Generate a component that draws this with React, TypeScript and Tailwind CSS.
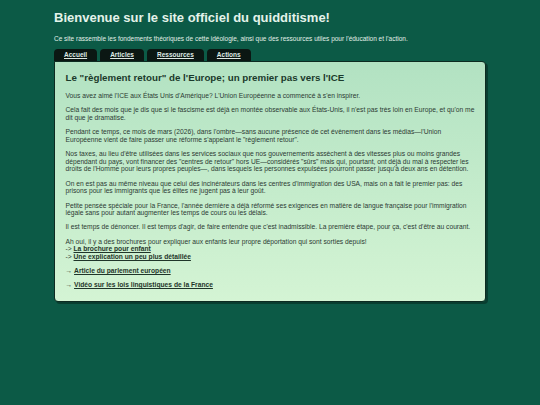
import React from "react";

const tabs = ["Accueil", "Articles", "Ressources", "Actions"];

export default function App() {
  return (
    <div
      className="min-h-[405px] bg-[#0c5a46]"
      style={{ fontFamily: '"Liberation Sans", Arial, sans-serif' }}
    >
      <div className="w-[432px] mx-auto pt-[10px]">
        <h1 className="text-[13px] leading-[15px] font-bold text-[#e4f3ea]">
          Bienvenue sur le site officiel du quidditisme!
        </h1>
        <p className="mt-[9.5px] text-[6.5px] leading-[7.5px] text-[#e2f0e8]">
          Ce site rassemble les fondements théoriques de cette idéologie, ainsi que des ressources utiles pour l'éducation et l'action.
        </p>
        <nav className="mt-[7px] flex gap-[3px]">
          {tabs.map((t) => (
            <a
              key={t}
              href="#"
              className="h-[12px] flex items-center px-[10px] rounded-t-[4px] bg-[#0b1713] text-[6.5px] font-bold underline text-[#dfeae4]"
            >
              {t}
            </a>
          ))}
        </nav>
        <div className="border border-[#0d2b21] rounded-[4px] rounded-tl-none bg-linear-to-b from-[#b2e2c2] to-[#d4f4d4] shadow-[2px_2px_0_rgba(0,0,0,0.3)] px-[10.5px] pt-[10px] pb-[12px] text-[6.7px] leading-[7.7px] text-[#2c3a33]">
          <h2 className="text-[9.75px] leading-[11px] font-bold text-[#1b3a2b] mb-[9px]">
            Le "règlement retour" de l'Europe; un premier pas vers l'ICE
          </h2>
          <div className="flex flex-col gap-[6.5px]">
            <p>Vous avez aimé l'ICE aux États Unis d'Amérique? L'Union Européenne a commencé à s'en inspirer.</p>
            <p>
              Cela fait des mois que je dis que si le fascisme est déjà en montée observable aux États-Unis, il n'est pas très loin en Europe, et qu'on me dit que je dramatise.
            </p>
            <p>
              Pendant ce temps, ce mois de mars (2026), dans l'ombre—sans aucune présence de cet évènement dans les médias—l'Union Européenne vient de faire passer une réforme s'appelant le "règlement retour".
            </p>
            <p>
              Nos taxes, au lieu d'être utilisées dans les services sociaux que nos gouvernements assèchent à des vitesses plus ou moins grandes dépendant du pays, vont financer des "centres de retour" hors UE—considérés "sûrs" mais qui, pourtant, ont déjà du mal à respecter les droits de l'Homme pour leurs propres peuples—, dans lesquels les personnes expulsées pourront passer jusqu'à deux ans en détention.
            </p>
            <p>
              On en est pas au même niveau que celui des incinérateurs dans les centres d'immigration des USA, mais on a fait le premier pas: des prisons pour les immigrants que les élites ne jugent pas à leur goût.
            </p>
            <p>
              Petite pensée spéciale pour la France, l'année dernière a déjà réformé ses exigences en matière de langue française pour l'immigration légale sans pour autant augmenter les temps de cours ou les délais.
            </p>
            <p>
              Il est temps de dénoncer. Il est temps d'agir, de faire entendre que c'est inadmissible. La première étape, pour ça, c'est d'être au courant.
            </p>
            <p>
              Ah oui, il y a des brochures pour expliquer aux enfants leur propre déportation qui sont sorties depuis!
              <br />
              -&gt;{" "}
              <a href="#" className="font-bold underline text-[#1f3529]">
                La brochure pour enfant
              </a>
              <br />
              -&gt;{" "}
              <a href="#" className="font-bold underline text-[#1f3529]">
                Une explication un peu plus détaillée
              </a>
            </p>
            <p>
              →{" "}
              <a href="#" className="font-bold underline text-[#1f3529]">
                Article du parlement européen
              </a>
            </p>
            <p>
              →{" "}
              <a href="#" className="font-bold underline text-[#1f3529]">
                Vidéo sur les lois linguistiques de la France
              </a>
            </p>
          </div>
        </div>
      </div>
    </div>
  );
}
